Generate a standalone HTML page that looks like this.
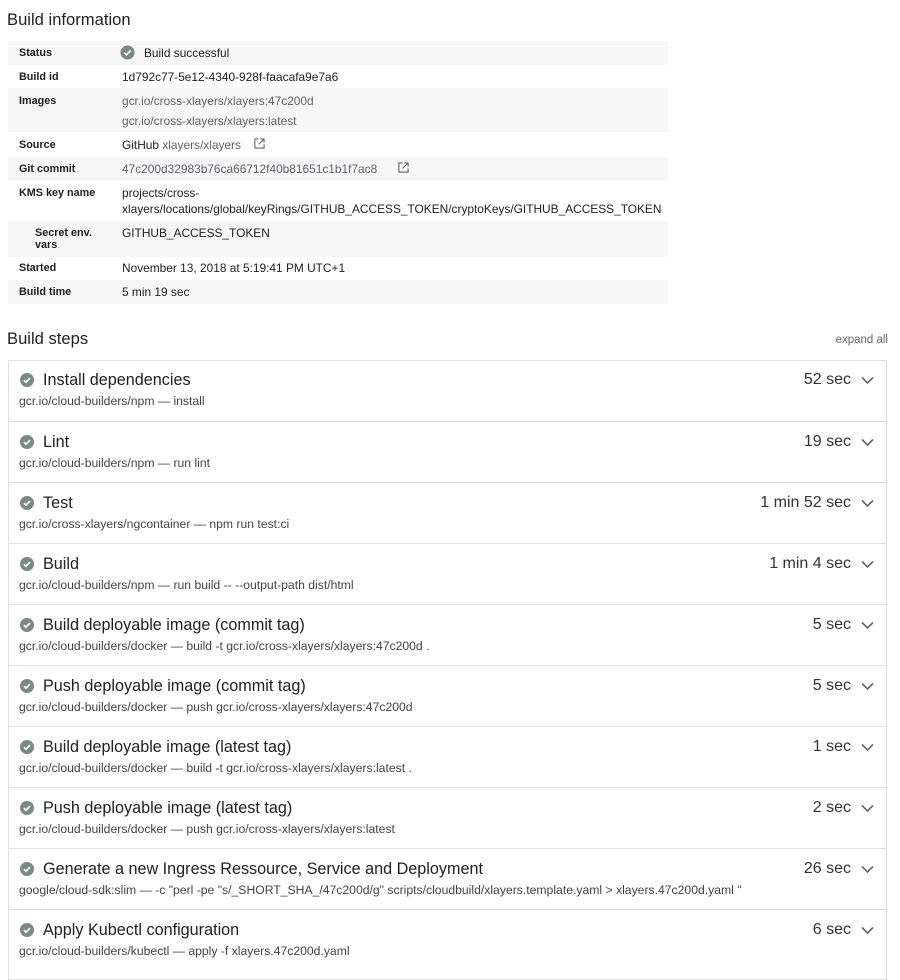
<!DOCTYPE html>
<html><head><style>
body{margin:0;background:#fff;font-family:"Liberation Sans",Arial,sans-serif;color:#212121;width:900px;height:967px;overflow:hidden;position:relative}
.a{position:absolute;white-space:nowrap}
h1{position:absolute;margin:0;font-weight:normal;font-size:16.6px;left:7px}
.bg{position:absolute;left:8px;width:660px;background:#f7f7f7}
.l{position:absolute;left:19px;font-size:10.8px;font-weight:bold;white-space:nowrap}
.v{position:absolute;left:122px;font-size:11.9px;white-space:nowrap}
.g{color:#5f6368}
.box{position:absolute;left:8px;top:360px;width:879px;height:620px;border:1px solid #e0e0e0;box-sizing:border-box}
.row{position:absolute;left:8px;width:879px;height:61px;border-top:1px solid #e0e0e0;box-sizing:border-box}
.t{position:absolute;left:35px;top:11px;font-size:16.2px}
.s{position:absolute;left:11px;top:34px;font-size:12.2px;color:#444;white-space:nowrap}
.d{position:absolute;right:36px;top:11px;font-size:16px;color:#333}
.ck{position:absolute;left:12px;top:13px}
.cv{position:absolute;right:13px;top:16px}
</style></head><body>
<h1 style="top:10px">Build information</h1>
<div class="bg" style="top:41px;height:24px"></div>
<div class="bg" style="top:88px;height:44px"></div>
<div class="bg" style="top:157px;height:24px"></div>
<div class="bg" style="top:221px;height:36px"></div>
<div class="bg" style="top:280px;height:24px"></div>
<div class="l" style="top:47px">Status</div>
<svg class="a" style="left:120px;top:45px" width="15" height="15" viewBox="0 0 16 16"><circle cx="8" cy="8" r="7.5" fill="#7b8a86"/><path d="M4.5 8.2l2.3 2.3 4.6-4.6" stroke="#fff" stroke-width="1.8" fill="none"/></svg>
<div class="v" style="top:46px;left:144px">Build successful</div>
<div class="l" style="top:71px">Build id</div><div class="v" style="top:70px">1d792c77-5e12-4340-928f-faacafa9e7a6</div>
<div class="l" style="top:95px">Images</div>
<div class="v g" style="top:94px">gcr.io/cross-xlayers/xlayers:47c200d</div>
<div class="v g" style="top:114px">gcr.io/cross-xlayers/xlayers:latest</div>
<div class="l" style="top:139px">Source</div><div class="v" style="top:138px">GitHub <span class="g">xlayers/xlayers</span></div>
<svg class="a" style="left:254px;top:138px" width="11" height="11" viewBox="0 0 12 12" fill="none" stroke="#666" stroke-width="1.2"><path d="M5 1H1v10h10V7M7 1h4v4M11 1L5 7"/></svg>
<div class="l" style="top:163px">Git commit</div><div class="v g" style="top:162px">47c200d32983b76ca66712f40b81651c1b1f7ac8</div>
<svg class="a" style="left:398px;top:162px" width="11" height="11" viewBox="0 0 12 12" fill="none" stroke="#666" stroke-width="1.2"><path d="M5 1H1v10h10V7M7 1h4v4M11 1L5 7"/></svg>
<div class="l" style="top:187px">KMS key name</div>
<div class="v" style="top:186px">projects/cross-</div>
<div class="v" style="top:202px">xlayers/locations/global/keyRings/GITHUB_ACCESS_TOKEN/cryptoKeys/GITHUB_ACCESS_TOKEN</div>
<div class="l" style="top:227px;left:35px">Secret env.</div><div class="l" style="top:239px;left:35px">vars</div>
<div class="v" style="top:226px">GITHUB_ACCESS_TOKEN</div>
<div class="l" style="top:262px">Started</div><div class="v" style="top:261px">November 13, 2018 at 5:19:41 PM UTC+1</div>
<div class="l" style="top:286px">Build time</div><div class="v" style="top:285px">5 min 19 sec</div>
<h1 style="top:329px">Build steps</h1>
<div class="a" style="right:12px;top:334px;font-size:11.5px;color:#666">expand all</div>
<div class="box"></div>
<div id="steps"></div>
<script>
var S=[["Install dependencies","gcr.io/cloud-builders/npm — install","52 sec"],
["Lint","gcr.io/cloud-builders/npm — run lint","19 sec"],
["Test","gcr.io/cross-xlayers/ngcontainer — npm run test:ci","1 min 52 sec"],
["Build","gcr.io/cloud-builders/npm — run build -- --output-path dist/html","1 min 4 sec"],
["Build deployable image (commit tag)","gcr.io/cloud-builders/docker — build -t gcr.io/cross-xlayers/xlayers:47c200d .","5 sec"],
["Push deployable image (commit tag)","gcr.io/cloud-builders/docker — push gcr.io/cross-xlayers/xlayers:47c200d","5 sec"],
["Build deployable image (latest tag)","gcr.io/cloud-builders/docker — build -t gcr.io/cross-xlayers/xlayers:latest .","1 sec"],
["Push deployable image (latest tag)","gcr.io/cloud-builders/docker — push gcr.io/cross-xlayers/xlayers:latest","2 sec"],
["Generate a new Ingress Ressource, Service and Deployment","google/cloud-sdk:slim — -c \"perl -pe \"s/_SHORT_SHA_/47c200d/g\" scripts/cloudbuild/xlayers.template.yaml > xlayers.47c200d.yaml \"","26 sec"],
["Apply Kubectl configuration","gcr.io/cloud-builders/kubectl — apply -f xlayers.47c200d.yaml","6 sec"]];
var h="";S.forEach(function(s,i){h+='<div class="row" style="top:'+(360+i*61)+'px;'+(i==0?'border-top:none':'')+'"><svg class="ck" width="14" height="14" viewBox="0 0 16 16"><circle cx="8" cy="8" r="8" fill="#7b8a86"/><path d="M4.5 8.2l2.3 2.3 4.6-4.6" stroke="#fff" stroke-width="2" fill="none"/></svg><div class="t">'+s[0]+'</div><div class="s">'+s[1].replace(/</g,"&lt;").replace(/>/g,"&gt;")+'</div><div class="d">'+s[2]+'</div><svg class="cv" width="13" height="9" viewBox="0 0 13 9"><path d="M1 1.5l5.5 5.5 5.5-5.5" stroke="#666" stroke-width="1.6" fill="none"/></svg></div>'});
document.getElementById("steps").innerHTML=h;
</script>
</body></html>
